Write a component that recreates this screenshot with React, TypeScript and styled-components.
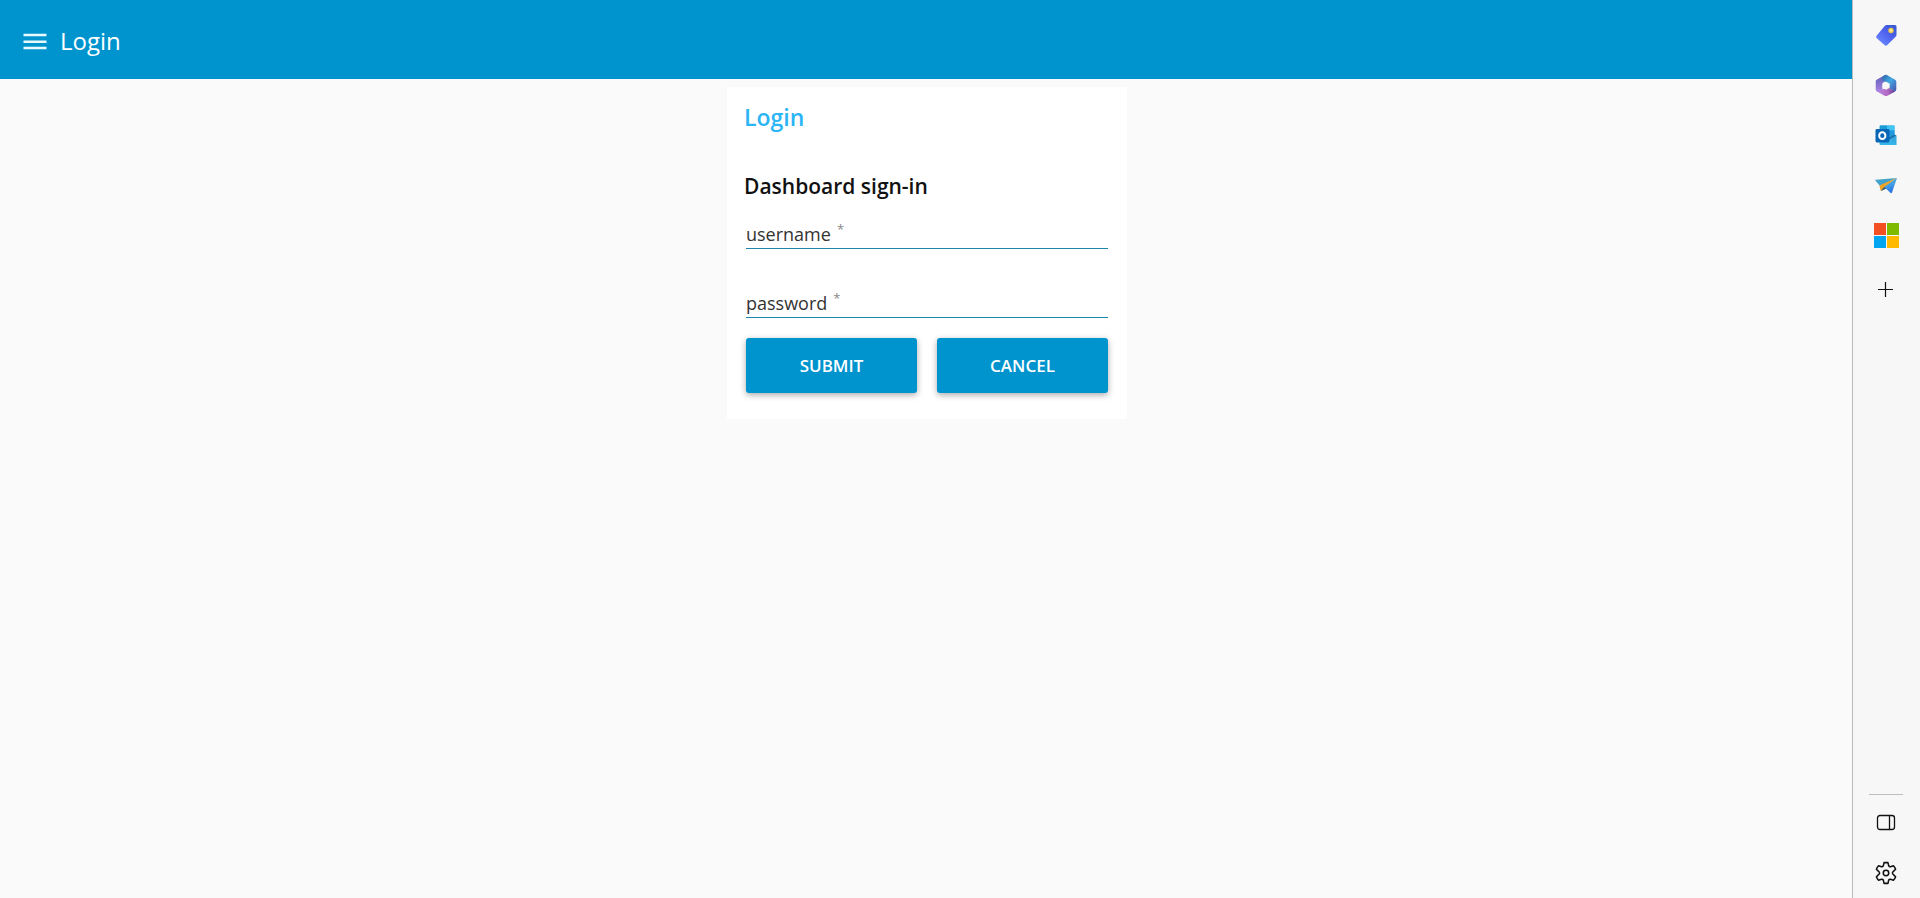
import React from "react";
import styled, { createGlobalStyle } from "styled-components";

const GlobalStyle = createGlobalStyle`
  * { box-sizing: border-box; }
  body {
    margin: 0;
    background: #fafafa;
    color: #111;
    font-family: "Segoe UI", "Open Sans", "Noto Sans", sans-serif;
  }
`;

const Shell = styled.div`
  display: flex;
  min-height: 100vh;
`;

const Page = styled.div`
  flex: 1;
  min-width: 0;
`;

const Toolbar = styled.header`
  display: flex;
  align-items: center;
  gap: 10px;
  height: 79px;
  padding: 4px 20px 0;
  background: #0094ce;
  color: #fff;
`;

const MenuButton = styled.button`
  display: flex;
  padding: 0;
  border: 0;
  background: none;
  color: #e9faff;
  cursor: pointer;
`;

const ToolbarTitle = styled.h1`
  margin: 0;
  padding-bottom: 2px;
  font-size: 24px;
  font-weight: 400;
  line-height: 32px;
`;

const Content = styled.main`
  display: flex;
  justify-content: center;
  padding: 8px 0 8px 2px;
`;

const Card = styled.section`
  width: 400px;
  padding: 14px 19px 26px;
  background: #fff;
`;

const CardTitle = styled.h2`
  margin: 0 -2px;
  color: #2cb5f5;
  font-size: 23px;
  font-weight: 600;
  line-height: 32px;
`;

const FormTitle = styled.h3`
  margin: 37px -2px 12px;
  font-size: 21px;
  font-weight: 600;
  line-height: 32px;
`;

const Form = styled.form`
  display: flex;
  flex-direction: column;
  gap: 19px;
`;

const Fields = styled.div`
  display: grid;
  gap: 33px;
`;

const Field = styled.div`
  display: grid;
`;

const FieldLabel = styled.label`
  grid-area: 1 / 1;
  padding-top: 4px;
  color: #333;
  font-size: 18px;
  line-height: 32px;
  pointer-events: none;
`;

const Required = styled.span`
  margin-left: 6px;
  color: #888;
  font-size: 13px;
  line-height: 1;
  vertical-align: super;
`;

const FieldInput = styled.input`
  grid-area: 1 / 1;
  width: 100%;
  height: 35px;
  padding: 0;
  border: 0;
  border-bottom: 1px solid #1c86ab;
  outline: 0;
  background: transparent;
  font: inherit;
`;

const Actions = styled.div`
  display: grid;
  grid-template-columns: 1fr 1fr;
  gap: 20px;
`;

const ActionButton = styled.button`
  height: 55px;
  border: 0;
  border-radius: 3px;
  background: #0094ce;
  box-shadow: 0 2px 6px rgba(0, 0, 0, 0.34);
  color: #fff;
  font-family: inherit;
  font-size: 17px;
  font-weight: 600;
  cursor: pointer;
`;

const Sidebar = styled.aside`
  display: flex;
  flex-direction: column;
  justify-content: space-between;
  width: 68px;
  padding: 10px 1px 0 0;
  border-left: 1px solid #bbb;
  background: #f7f7f7;
`;

const SidebarGroup = styled.nav`
  display: flex;
  flex-direction: column;
  align-items: center;
`;

const SidebarButton = styled.button`
  display: flex;
  align-items: center;
  justify-content: center;
  width: 50px;
  height: 50px;
  padding: 0;
  border: 0;
  background: none;
  color: #111;
  cursor: pointer;
`;

const AddButton = styled(SidebarButton)`
  margin-top: 4px;
`;

const Divider = styled.hr`
  width: 34px;
  height: 1px;
  margin: 0 0 3px;
  border: 0;
  background: #bdbdbd;
`;

const MenuIcon = () => (
  <svg width="30" height="18" viewBox="0 0 30 18" aria-hidden="true">
    <path d="M3.500 2h23M3.500 8.700h23M3.500 15h23" stroke="currentColor" strokeWidth="2.400" />
  </svg>
);

const ShoppingIcon = () => (
  <svg width="22" height="22" viewBox="0 -0.500 22 22" aria-hidden="true">
    <defs>
      <linearGradient id="tag" x1="1" y1="0" x2="0.2" y2="1">
        <stop offset="0" stopColor="#3358cf" />
        <stop offset="0.5" stopColor="#4f62ee" />
        <stop offset="1" stopColor="#6c8cff" />
      </linearGradient>
    </defs>
    <path d="M11.600 .5h7.800A1.800 1.800 0 0 1 21.500 2.300v8c0 .7-.2 1.200-.7 1.700l-8.500 8.500a2 2 0 0 1-2.800 0l-7.700-6.800a2 2 0 0 1 0-2.800l8.100-9.700c.4-.5 1-.7 1.700-.7Z" fill="url(#tag)" />
    <circle cx="16" cy="6" r="2.700" fill="#efc94a" />
    <circle cx="16" cy="6" r="1.200" fill="#fff0a0" />
  </svg>
);

const OfficeIcon = () => (
  <svg width="22" height="22" viewBox="0 -0.500 22 22" aria-hidden="true">
    <defs>
      <linearGradient id="office-left" x1="0" y1="0" x2="0" y2="1">
        <stop offset="0" stopColor="#5a61b4" />
        <stop offset="1" stopColor="#a882e4" />
      </linearGradient>
      <linearGradient id="office-right" x1="0" y1="0" x2="1" y2="1">
        <stop offset="0" stopColor="#2b62a8" />
        <stop offset="0.450" stopColor="#43a8e0" />
        <stop offset="1" stopColor="#4650ad" />
      </linearGradient>
      <linearGradient id="office-base" x1="0" y1="0" x2="1" y2="0">
        <stop offset="0" stopColor="#b48ae6" />
        <stop offset="0.600" stopColor="#b568c2" />
        <stop offset="1" stopColor="#5b3b91" />
      </linearGradient>
    </defs>
    <path d="M9.500.7 2 5C1 5.600.7 6.200.7 7.200v7.500c0 1 .5 1.800 1.300 2.200L7.500 17V8.500L13 5.200V1.500C11.800.2 10.700 0 9.500.7Z" fill="url(#office-left)" />
    <path d="M9 1.200c1.500-.9 2.500-.7 4 .1L19.800 5c1 .6 1.500 1.300 1.500 2.400v7.200c0 1.300-.4 2-1.500 2.600l-5.300-3.300V9.200L7 5.500c0-2 .6-3.400 2-4.300Z" fill="url(#office-right)" />
    <path d="M1.200 16c3 .7 4.800 0 6.800-1.200l6.500-3.800v3l5.700 2.900-7.300 4.200c-1.300.7-2.500.7-3.800 0L2 17Z" fill="url(#office-base)" />
    <path d="m11 7.200 3.500 2v4L11 15.200l-3.500-2v-4Z" fill="#f7f7f7" />
  </svg>
);

const OutlookIcon = () => (
  <svg width="22" height="22" viewBox="0 -1 22 22" aria-hidden="true">
    <path d="M6 0.500h12.500a1 1 0 0 1 1 1V13H4.500V1.500a1 1 0 0 1 1-1Z" fill="#28a8ea" />
    <path d="M5 .5h7v5H5Z" fill="#199bd5" />
    <path d="M12 .5h7.500v5H12Z" fill="#41c4f2" />
    <path d="M12 5.500h7.500V12H12Z" fill="#2199dc" />
    <path d="m21.500 10.500-8.500 5 8.500 4.500Z" fill="#35a9e0" />
    <path d="M4.500 12h7L21.500 19.600c-.3.4-.7.5-1.200.5H5.500a1 1 0 0 1-1-1Z" fill="#36b5ea" />
    <path d="m21.500 10.500-7.500 4.500-2-1.200 7.500-4.300Z" fill="#1872aa" />
    <rect x="0.500" y="4" width="14" height="13.500" rx="1.400" fill="#0966b7" />
    <ellipse cx="7.300" cy="10.700" rx="3.100" ry="3.400" fill="none" stroke="#fff" strokeWidth="2" />
  </svg>
);

const DropIcon = () => (
  <svg width="22" height="22" viewBox="0 0 22 22" aria-hidden="true">
    <defs>
      <linearGradient id="plane" x1="0" y1="0" x2="0.3" y2="1">
        <stop offset="0" stopColor="#46a9d6" />
        <stop offset="0.5" stopColor="#45a1e5" />
        <stop offset="1" stopColor="#2872e6" />
      </linearGradient>
    </defs>
    <path d="M.4 6.600c-.4-.4-.1-.8.400-.8L21.500 4 5 12Z" fill="#42a4cc" />
    <path d="M21.500 4 4.400 11.400l1.100 4.900c.2.600.7.700 1.200.3L10 13.500Z" fill="#efa325" />
    <path d="M9.400 12.800 6 16.700c.4.200.7.100 1.200-.2l4.200-2Z" fill="#36546e" />
    <path d="M21.500 4c.3 0 .4.200.3.600L17 18.600c-.2.600-.8.700-1.300.3L9.300 13Z" fill="url(#plane)" />
  </svg>
);

const MicrosoftIcon = () => (
  <svg width="26" height="26" viewBox="0 0 26 26" aria-hidden="true">
    <path d="M1 1h12v12H1Z" fill="#f25022" />
    <path d="M14 1h12v12H14Z" fill="#7fba00" />
    <path d="M1 14h12v12H1Z" fill="#00a4ef" />
    <path d="M14 14h12v12H14Z" fill="#ffb900" />
  </svg>
);

const PlusIcon = () => (
  <svg width="16" height="16" viewBox="0 0 16 16" aria-hidden="true">
    <path d="M7.500 1v15M0 8.500h15" stroke="currentColor" strokeWidth="1.200" />
  </svg>
);

const PanelIcon = () => (
  <svg width="20" height="20" viewBox="0 0 20 20" fill="none" stroke="currentColor" strokeWidth="1.300" aria-hidden="true">
    <rect x="1.500" y="2.500" width="17" height="14" rx="2.500" />
    <path d="M13.500 2.500v14" />
  </svg>
);

const GearIcon = () => (
  <svg width="24" height="24" viewBox="0 -0.500 22 22" fill="none" stroke="currentColor" strokeWidth="1.400" strokeLinejoin="round" aria-hidden="true">
    <path d="M9.200 1h3.600l.6 2.700c.2.700 1 1.200 1.700 1l2.700-.8c.9.900 1.600 2 2 3.200l-2 1.900a1.700 1.700 0 0 0 0 3l2 1.900c-.4 1.200-1.100 2.300-2 3.200l-2.700-.8c-.7-.2-1.500.3-1.700 1l-.6 2.700H9.200l-.6-2.700c-.2-.7-1-1.200-1.700-1l-2.700.8c-.9-.9-1.600-2-2-3.200l2-1.900a1.700 1.700 0 0 0 0-3l-2-1.900c.4-1.200 1.100-2.300 2-3.200l2.700.8c.7.2 1.500-.3 1.700-1Z" />
    <circle cx="11" cy="10.500" r="2.500" />
  </svg>
);

export default function App() {
  return (
    <>
      <GlobalStyle />
      <Shell>
        <Page>
          <Toolbar>
            <MenuButton type="button" aria-label="Open menu"><MenuIcon /></MenuButton>
            <ToolbarTitle>Login</ToolbarTitle>
          </Toolbar>
          <Content>
            <Card>
              <CardTitle>Login</CardTitle>
              <FormTitle>Dashboard sign-in</FormTitle>
              <Form onSubmit={(event) => event.preventDefault()}>
                <Fields>
                  <Field>
                    <FieldLabel htmlFor="username">username<Required>*</Required></FieldLabel>
                    <FieldInput id="username" type="text" required />
                  </Field>
                  <Field>
                    <FieldLabel htmlFor="password">password<Required>*</Required></FieldLabel>
                    <FieldInput id="password" type="password" required />
                  </Field>
                </Fields>
                <Actions>
                  <ActionButton type="submit">SUBMIT</ActionButton>
                  <ActionButton type="reset">CANCEL</ActionButton>
                </Actions>
              </Form>
            </Card>
          </Content>
        </Page>
        <Sidebar>
          <SidebarGroup aria-label="Apps">
            <SidebarButton type="button" aria-label="Shopping"><ShoppingIcon /></SidebarButton>
            <SidebarButton type="button" aria-label="Microsoft 365"><OfficeIcon /></SidebarButton>
            <SidebarButton type="button" aria-label="Outlook"><OutlookIcon /></SidebarButton>
            <SidebarButton type="button" aria-label="Drop"><DropIcon /></SidebarButton>
            <SidebarButton type="button" aria-label="Microsoft"><MicrosoftIcon /></SidebarButton>
            <AddButton type="button" aria-label="Customize"><PlusIcon /></AddButton>
          </SidebarGroup>
          <SidebarGroup aria-label="Sidebar options">
            <Divider />
            <SidebarButton type="button" aria-label="Toggle sidebar"><PanelIcon /></SidebarButton>
            <SidebarButton type="button" aria-label="Settings"><GearIcon /></SidebarButton>
          </SidebarGroup>
        </Sidebar>
      </Shell>
    </>
  );
}
